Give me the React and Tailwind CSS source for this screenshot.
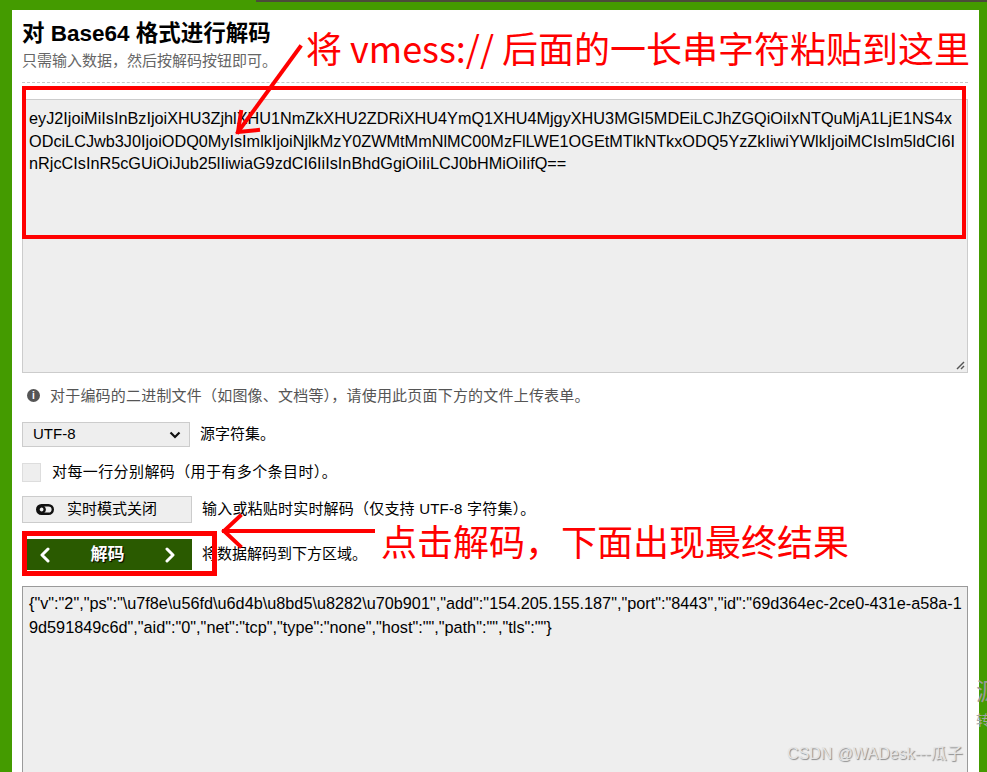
import React from 'react';

const FONT = "font-['Liberation_Sans','Noto_Sans_CJK_SC',sans-serif]";
const CJK = "font-['Noto_Sans_CJK_SC','Liberation_Sans',sans-serif]";

// encoded input, broken where the textarea wraps it
const inputLines = [
  'eyJ2IjoiMiIsInBzIjoiXHU3ZjhlXHU1NmZkXHU2ZDRiXHU4YmQ1XHU4MjgyXHU3MGI5MDEiLCJhZGQiOiIxNTQuMjA1LjE1NS4x',
  'ODciLCJwb3J0IjoiODQ0MyIsImlkIjoiNjlkMzY0ZWMtMmNlMC00MzFlLWE1OGEtMTlkNTkxODQ5YzZkIiwiYWlkIjoiMCIsIm5ldCI6I',
  'nRjcCIsInR5cGUiOiJub25lIiwiaG9zdCI6IiIsInBhdGgiOiIiLCJ0bHMiOiIifQ==',
];

const outputLines = [
  '{"v":"2","ps":"\\u7f8e\\u56fd\\u6d4b\\u8bd5\\u8282\\u70b901","add":"154.205.155.187","port":"8443","id":"69d364ec-2ce0-431e-a58a-1',
  '9d591849c6d","aid":"0","net":"tcp","type":"none","host":"","path":"","tls":""}',
];

const ToggleOff = () => (
  <svg width="18" height="11" viewBox="0 0 18 11" fill="none" stroke="#111" strokeWidth="2.4">
    <rect x="1.2" y="1.2" width="15.6" height="8.6" rx="4.3" />
    <circle cx="5.6" cy="5.5" r="3.1" />
  </svg>
);

const Chevron = ({ dir }) => (
  <svg width="12" height="16" viewBox="0 0 12 16" fill="none" stroke="#fff" strokeWidth="3" strokeLinecap="round" strokeLinejoin="round">
    {dir === 'left' ? <polyline points="9,2 3,8 9,14" /> : <polyline points="3,2 9,8 3,14" />}
  </svg>
);

const Annotations = () => (
  <>
    {/* box around the input */}
    <div className="absolute left-[22px] top-[86px] w-[944px] h-[153px] border-[4px] border-[#ff0000]" />
    {/* box around the decode button */}
    <div className="absolute left-[22px] top-[531px] w-[195px] h-[45px] border-[5px] border-[#ff0000]" />

    <svg className="absolute left-0 top-0" width="987" height="772" fill="none" stroke="#ff0000" strokeWidth="4" strokeLinecap="square">
      <line x1="300" y1="47" x2="238" y2="132" />
      <polyline points="241,112 238,132 258,130" />
      <line x1="224" y1="531" x2="373" y2="531" />
      <polyline points="240,516 224,531 240,546" />
    </svg>

    <div className={`absolute left-[306px] top-[25px] text-[36px] leading-[44px] text-[#ff0000] whitespace-nowrap ${CJK}`}>
      将 vmess:// 后面的一长串字符粘贴到这里
    </div>
    <div className={`absolute left-[381px] top-[518px] text-[36px] leading-[44px] text-[#ff0000] whitespace-nowrap ${CJK}`}>
      点击解码，下面出现最终结果
    </div>

    {/* edge of the neighbouring page, cut off by the window */}
    <div className={`absolute left-[976px] top-[676px] w-[11px] h-[56px] overflow-hidden ${CJK}`}>
      <div className="text-[24px] leading-[28px] text-[#9a9a9a]">源</div>
      <div className="mt-[6px] text-[14px] leading-[18px] text-[#a5a5a5]">转</div>
    </div>

    <div className="absolute left-[787px] top-[744px] text-[16px] leading-[20px] text-[#e4e4e4] whitespace-nowrap [text-shadow:1px_1px_1px_#8a8a8a]">
      CSDN @WADesk---瓜子
    </div>
  </>
);

export default function App() {
  return (
    <div className={`relative w-[987px] h-[772px] overflow-hidden bg-[#449b00] ${FONT}`}>
      <div className="h-[2px] ml-[256px] bg-[#4b4b3a]" />
      <div className="ml-[12px] mt-[8px] w-[967px] h-[762px] bg-white pl-[10px] pr-[11px] pt-[10px]">
        <h1 className="text-[22.5px] leading-[28px] font-bold text-black">对 Base64 格式进行解码</h1>
        <p className="mt-[3px] text-[15px] leading-[20px] text-[#666]">只需输入数据，然后按解码按钮即可。</p>
        <div className="mt-[11px] border-t border-dashed border-[#c8c8c8]" />

        <div className="mt-[16px] h-[274px] bg-[#eeeeee] border border-[#cccccc] px-[6px] pt-[7px] relative">
          <div className="text-[16.25px] leading-[22.5px] text-black whitespace-nowrap">
            {inputLines.map((l) => (
              <div key={l}>{l}</div>
            ))}
          </div>
          <svg className="absolute right-[2px] bottom-[2px]" width="10" height="10" viewBox="0 0 10 10" stroke="#555" strokeWidth="1.5">
            <line x1="2" y1="9" x2="9" y2="2" />
            <line x1="6" y1="9" x2="9" y2="6" />
          </svg>
        </div>

        <div className="mt-[11px] h-[22px] flex items-center gap-[10px] text-[15px] text-[#555]">
          <span className="ml-[5px] w-[13px] h-[13px] rounded-full bg-[#555] text-white text-[10px] leading-[13px] font-bold flex items-center justify-center">i</span>
          <span className={`${CJK} tracking-[0.2px]`}>对于编码的二进制文件（如图像、文档等），请使用此页面下方的文件上传表单。</span>
        </div>

        <div className="mt-[16px] flex items-center gap-[10px]">
          <div className="w-[168px] h-[25px] bg-[#eeeeee] border border-[#cccccc] flex items-center justify-between pl-[10px] pr-[8px] text-[15px] text-black">
            <span>UTF-8</span>
            <svg width="12" height="8" viewBox="0 0 12 8" fill="none" stroke="#111" strokeWidth="2.2">
              <polyline points="1.5,1.5 6,6 10.5,1.5" />
            </svg>
          </div>
          <span className="text-[15px] text-black">源字符集。</span>
        </div>

        <div className="mt-[15px] flex items-center gap-[11px]">
          <div className="w-[19px] h-[19px] bg-[#eeeeee] border border-[#dddddd]" />
          <span className="text-[15px] leading-[20px] text-black tracking-[0.4px]">对每一行分别解码（用于有多个条目时）。</span>
        </div>

        <div className="mt-[14px] flex items-center gap-[10px]">
          <div className="w-[170px] h-[27px] bg-[#eeeeee] border border-[#cccccc] flex items-center gap-[13px] pl-[13px] text-[15px] text-black">
            <ToggleOff />
            <span>实时模式关闭</span>
          </div>
          <span className="text-[15px] text-black tracking-[0.2px]">输入或粘贴时实时解码（仅支持 UTF-8 字符集）。</span>
        </div>

        <div className="mt-[16px] flex items-center gap-[10px]">
          <div className="w-[170px] h-[31px] bg-[#2a5a00] flex items-center justify-between pl-[17px] pr-[16px]">
            <Chevron dir="left" />
            <span className="text-[17px] font-bold text-white [text-shadow:1px_1px_1px_#000]">解码</span>
            <Chevron dir="right" />
          </div>
          <span className="text-[15px] text-black">将数据解码到下方区域。</span>
        </div>

        <div className="mt-[16px] h-[200px] bg-[#eeeeee] border border-[#9a9a9a] px-[6px] pt-[4px]">
          <div className="text-[16.25px] leading-[24px] text-black whitespace-nowrap">
            {outputLines.map((l) => (
              <div key={l}>{l}</div>
            ))}
          </div>
        </div>
      </div>

      <Annotations />
    </div>
  );
}
